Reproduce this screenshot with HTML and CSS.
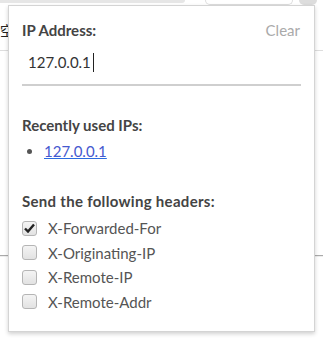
FILE: index.html
```html
<!DOCTYPE html>
<html lang="en">
<head>
  <meta charset="UTF-8">
  <title>IP Spoof</title>
  <link rel="stylesheet" href="styles.css">
</head>
<body>

  <!-- page behind the popup -->
  <div class="page">
    <div class="toolbar">
      <div class="tab-gray"></div>
      <div class="tab-white"></div>
      <div class="tab-dot"></div>
    </div>
    <div class="page-text">空</div>
    <div class="rule rule-top"></div>
    <div class="rule rule-bottom"></div>
  </div>

  <div class="popup">
    <div class="head">
      <span class="title">IP Address:</span>
      <span class="clear">Clear</span>
    </div>
    <div class="ip-input">127.0.0.1<span class="caret"></span></div>

    <div class="title section">Recently used IPs:</div>
    <ul class="recent">
      <li><a href="#">127.0.0.1</a></li>
    </ul>

    <div class="title section section-headers">Send the following headers:</div>
    <div class="headers">
      <label class="check-row">
        <span class="box checked">
          <svg width="11" height="10" viewBox="0 0 11 10"><path d="M1 5.5 L4 8.5 L10 1.5" fill="none" stroke="#222" stroke-width="2.4"/></svg>
        </span>
        X-Forwarded-For
      </label>
      <label class="check-row"><span class="box"></span>X-Originating-IP</label>
      <label class="check-row"><span class="box"></span>X-Remote-IP</label>
      <label class="check-row"><span class="box"></span>X-Remote-Addr</label>
    </div>
  </div>

</body>
</html>
```

FILE: styles.css
```css
body {
  margin: 0;
  background: #fff;
  font-family: Lato, "Noto Sans", sans-serif;
  color: #444;
}

.page {
  height: 342px;
  overflow: hidden;
}

.toolbar {
  display: flex;
  align-items: flex-start;
  height: 6px;
}

.tab-gray {
  width: 185px;
  height: 3px;
  background: #e6e6e6;
  border-radius: 0 0 12px 0;
}

.tab-white {
  width: 86px;
  height: 4px;
  margin-left: 20px;
  border: 1px solid #ddd;
  border-top: none;
  border-radius: 0 0 12px 12px;
}

.tab-dot {
  width: 18px;
  height: 5px;
  margin-left: 6px;
  background: #ddd;
  border-radius: 0 0 9px 9px;
}

.page-text {
  margin-top: 17px;
  font-family: "Noto Sans CJK SC", sans-serif;
  font-size: 14px;
  color: #222;
  line-height: 14px;
}

.rule {
  border-top: 1px solid #ddd;
}

.rule-top {
  margin-top: 13px;
}

.rule-bottom {
  margin-top: 204px;
  border-top-color: #aaa;
  border-bottom: 1px solid #eee;
}

.popup {
  position: absolute;
  left: 8px;
  top: 5px;
  width: 279px;
  padding: 14px 13px 17px 13px;
  background: #fff;
  border: 1px solid #d4d4d4;
  box-shadow: 0 2px 4px rgba(0, 0, 0, 0.18);
}

.head {
  display: flex;
  justify-content: space-between;
  align-items: center;
  height: 20px;
}

.title {
  font-size: 15px;
  font-weight: bold;
  line-height: 20px;
  color: #444;
}

.clear {
  font-size: 15px;
  color: #aaa;
  margin-right: 1px;
}

.ip-input {
  display: flex;
  align-items: center;
  height: 44px;
  padding-left: 6px;
  font-size: 15px;
  color: #333;
  border-bottom: 2px solid #cfcfcf;
}

.caret {
  display: inline-block;
  width: 1px;
  height: 19px;
  margin-left: 2px;
  background: #222;
}

.section {
  margin-top: 29px;
}

.section-headers {
  margin-top: 30px;
  letter-spacing: 0.3px;
}

.recent {
  margin: 6px 0 0 0;
  padding-left: 22px;
  font-size: 15px;
  line-height: 20px;
}

.recent li::marker {
  color: #555;
}

.recent a {
  color: #4659cf;
  text-decoration-color: #2a6be0;
}

.headers {
  margin-top: 5px;
}

.check-row {
  display: flex;
  align-items: center;
  height: 24.5px;
  font-size: 15px;
  color: #555;
}

.box {
  display: flex;
  align-items: center;
  justify-content: center;
  box-sizing: border-box;
  width: 15px;
  height: 15px;
  margin-right: 11px;
  border: 1px solid #b5b5b5;
  border-radius: 3px;
  background: linear-gradient(#f4f4f4, #e2e2e2);
}
```
